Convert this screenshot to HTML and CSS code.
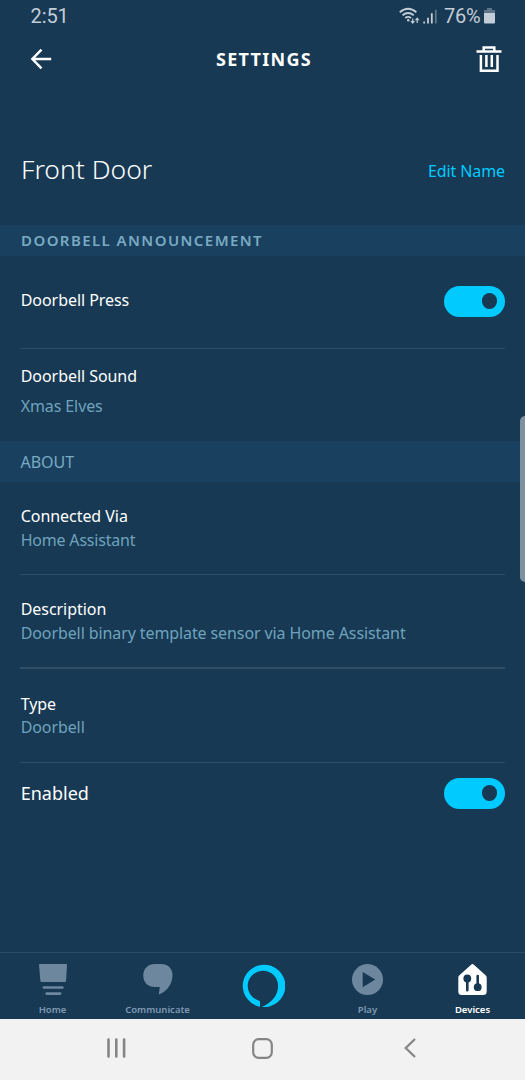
FILE: index.html
```html
<!DOCTYPE html>
<html lang="en">
<head>
<meta charset="utf-8">
<title>Settings</title>
<link rel="stylesheet" href="styles.css">
</head>
<body>
<div class="app">
  <div class="status">
    <span class="clock">2:51</span>
    <svg class="signals" width="40" height="20" viewBox="0 0 40 20" fill="none" stroke="#c3cdd8" stroke-width="1.8">
      <path d="M.8 6.2Q9 -.8 17.4 6.2M3.5 9.2Q9 4.7 14.7 9.2M6.2 12Q9 9.8 12 12"/>
      <circle cx="9.2" cy="14.3" r="1.2" fill="#c3cdd8" stroke="none"/>
      <path d="M13.7 12.5v4M18.2 17v-4" stroke-width="1.2"/>
      <path d="M11.3 15h4.8l-2.4 3zM15.8 14.2h4.8l-2.4-3z" fill="#c3cdd8" stroke="none"/>
      <path d="M25.2 17.5v-2M29 17.5v-5.7M32.8 17.5V7.2"/>
      <path d="M36.8 17.5V3.7" stroke="#5d7489"/>
    </svg>
    <span class="percent">76%</span>
    <svg class="battery" width="11" height="16" viewBox="0 0 11 16">
      <path d="M3 0h5v2h3v4H0V2h3z" fill="#5d7489"/>
      <path d="M0 5h11v9.5a1 1 0 0 1-1 1H1a1 1 0 0 1-1-1z" fill="#c3cdd8"/>
    </svg>
  </div>

  <header class="header">
    <svg width="22" height="22" viewBox="0 0 22 22" fill="none" stroke="#fff" stroke-width="2.5">
      <path d="M21.2 11H2.600M11.500 1.600 2.400 11l9.100 9.400"/>
    </svg>
    <h1 class="heading">SETTINGS</h1>
    <svg width="26" height="27" viewBox="0 0 26 27" fill="none" stroke="#fff" stroke-width="2.5">
      <path d="M.5 5.5h25M7.7 5V1.5h10.6V5M4.9 9v15.700h16.6V9M10.400 9v12M15.800 9v12"/>
    </svg>
  </header>

  <main class="content">
    <div class="device">
      <h2 class="name">Front Door</h2>
      <a class="edit">Edit Name</a>
    </div>

    <h3 class="band announce">DOORBELL ANNOUNCEMENT</h3>
    <section class="row press">
      <span class="label">Doorbell Press</span>
      <span class="toggle"></span>
    </section>
    <section class="row sound">
      <div class="pair">
        <span class="label">Doorbell Sound</span>
        <span class="value">Xmas Elves</span>
      </div>
    </section>

    <h3 class="band about">ABOUT</h3>
    <section class="row via">
      <div class="pair">
        <span class="label">Connected Via</span>
        <span class="value assistant">Home Assistant</span>
      </div>
    </section>
    <section class="row description">
      <div class="pair">
        <span class="label">Description</span>
        <span class="value">Doorbell binary template sensor via Home Assistant</span>
      </div>
    </section>
    <section class="row type">
      <div class="pair">
        <span class="label">Type</span>
        <span class="value">Doorbell</span>
      </div>
    </section>
    <section class="row enabled">
      <span class="label large">Enabled</span>
      <span class="toggle"></span>
    </section>
    <span class="scrollbar"></span>
  </main>

  <nav class="tabs">
    <div class="tab">
      <svg width="28" height="32" viewBox="0 0 28 32" fill="#6d879f">
        <path d="M1 0h26q1 0 1 1l-1 16q-.1 1-1 1H2.500q-1 0-1.100-1L0 1q0-1 1-1z"/>
        <rect x="3.700" y="22.200" width="21" height="2.600" rx="1.300"/>
        <rect x="6.400" y="28.300" width="16" height="2.600" rx="1.300"/>
      </svg>
      <span>Home</span>
    </div>
    <div class="tab">
      <svg width="30" height="32" viewBox="0 0 30 32" fill="#6d879f">
        <path d="M12 0h6c7 0 11.500 4.500 11.500 11 0 9-5.500 16.500-13.700 19.500l1-7.500H12C5 23 .3 18.500.3 11.500S5 0 12 0z"/>
      </svg>
      <span>Communicate</span>
    </div>
    <div class="tab">
      <svg width="44" height="44" viewBox="0 .3 44 44">
        <path fill="#00caff" fill-rule="evenodd" d="M22 1A21.200 21.200 0 0 0 19 43V38.500Q19 37.300 17.800 36.900A15.200 15.200 0 1 1 37.100 22C37.100 32 30 39.500 20.500 43.200A21.200 21.200 0 1 0 22 1z"/>
      </svg>
    </div>
    <div class="tab">
      <svg width="31" height="32" viewBox="0 0 31 32">
        <circle cx="15.500" cy="15.600" r="15.500" fill="#6d879f"/>
        <path d="M10.700 8v15.200l12.600-7.600z" fill="#173953"/>
      </svg>
      <span>Play</span>
    </div>
    <div class="tab active">
      <svg width="29" height="32" viewBox="0 0 29 32">
        <path d="M13.400.5q1.100-1 2.200 0l12 10.700q1.100 1 1.100 2.300V27.500q0 3.500-3.500 3.500H3.800Q.3 31 .3 27.500V13.500q0-1.300 1.100-2.300z" fill="#fff"/>
        <g fill="#173953">
          <circle cx="9.300" cy="14.500" r="3.900"/>
          <circle cx="19.700" cy="23.200" r="3.900"/>
        </g>
        <path d="M9.300 15v11.300M19.700 23V12" fill="none" stroke="#173953" stroke-width="2.600" stroke-linecap="round"/>
      </svg>
      <span>Devices</span>
    </div>
  </nav>

  <div class="system">
    <svg width="19" height="20" viewBox="0 0 19 20" fill="none" stroke="#858585" stroke-width="2.600" stroke-linecap="round">
      <path d="M1.500 1.500v17M9.300 1.500v17M17.100 1.500v17"/>
    </svg>
    <svg width="21" height="21" viewBox="0 0 21 21" fill="none" stroke="#858585" stroke-width="2.200">
      <rect x="1.200" y="1.200" width="18.600" height="18.600" rx="5.500"/>
    </svg>
    <svg width="20" height="20" viewBox="-5 0 20 20" fill="none" stroke="#858585" stroke-width="2.200">
      <path d="M11 1 1.700 10l9.300 9"/>
    </svg>
  </div>
</div>
</body>
</html>
```
FILE: styles.css
```css
* { box-sizing: border-box; }

body {
  margin: 0;
  background: #173953;
  font-family: "Noto Sans", "Open Sans", sans-serif;
  color: #fff;
}

h1, h2, h3 { margin: 0; }

.app {
  display: flex;
  flex-direction: column;
  width: 525px;
  height: 1080px;
  overflow: hidden;
}

.status {
  display: flex;
  align-items: center;
  height: 32px;
  padding: 0 30px;
  font-family: Roboto, sans-serif;
  font-size: 20px;
  letter-spacing: -.2px;
  color: #c3cdd8;
}

.clock { padding-left: .6px; letter-spacing: -.1px; }
.signals { margin-left: auto; }
.percent { margin-left: 4.500px; }
.battery { margin-left: 3.500px; }

.header {
  display: flex;
  align-items: center;
  justify-content: space-between;
  height: 54px;
  padding: 0 23px 0 30px;
}

.heading {
  font-size: 18px;
  letter-spacing: 1.300px;
}

.content {
  position: relative;
  flex: 1;
}

.device {
  display: flex;
  align-items: center;
  justify-content: space-between;
  height: 139px;
  padding: 30px 20px 0 21px;
}

.name {
  padding-bottom: 4px;
  font-size: 26.500px;
  font-weight: 300;
}

.edit {
  font-size: 16px;
  letter-spacing: -.1px;
  color: #00caff;
}

.band {
  display: flex;
  align-items: center;
  padding: 0 21px;
  background: #1a4060;
  color: #79aac2;
}

.announce {
  height: 31px;
  padding-bottom: 1px;
  font-size: 15px;
  font-weight: 600;
  letter-spacing: 1.420px;
}

.about {
  height: 41px;
  padding-left: 20.500px;
  font-size: 16px;
  font-weight: 400;
}

.row {
  display: flex;
  justify-content: space-between;
  align-items: center;
  margin: 0 20px;
  border-bottom: 1px solid #2e4e68;
}

.press { height: 93px; padding-bottom: 2px; }
.press .label { padding-bottom: 2px; }
.sound { height: 92px; padding-bottom: 8px; border-bottom: 0; }
.via { height: 93px; }
.description { height: 94px; border-bottom-width: 2px; }
.type { height: 94px; }
.enabled { height: 62px; padding-bottom: 2px; border-bottom: 0; }

.pair {
  display: flex;
  flex-direction: column;
}

.label, .value {
  padding-left: .7px;
  font-size: 16px;
  line-height: 24px;
}

.label { letter-spacing: -.05px; }

.value {
  letter-spacing: -.100px;
  color: #6fa3bd;
}

.assistant { letter-spacing: -.200px; }
.sound .pair { gap: 6px; }
.type .pair { gap: 0; }
.type .value { line-height: 23px; }
.label.large { font-size: 18px; letter-spacing: 0; }

.toggle {
  display: flex;
  align-items: center;
  justify-content: flex-end;
  width: 61.500px;
  height: 31px;
  padding-right: 8px;
  border-radius: 16px;
  background: #00caff;
}

.toggle::after {
  content: "";
  width: 15.500px;
  height: 15.500px;
  border-radius: 50%;
  background: #173953;
}

.scrollbar {
  position: absolute;
  top: 330px;
  right: 0;
  width: 5px;
  height: 166px;
  border-radius: 5px 0 0 5px;
  background: #7e919f;
}

.tabs {
  display: grid;
  grid-template-columns: repeat(5, minmax(0, 1fr));
  height: 67px;
  border-top: 1px solid #2a4d67;
}

.tab {
  display: flex;
  flex-direction: column;
  align-items: center;
  padding-top: 11px;
  font-size: 9.500px;
  font-weight: 600;
  line-height: 13px;
  color: #7f9ab4;
}

.tab span { margin-top: 7px; }
.active { color: #fff; }

.system {
  display: flex;
  align-items: center;
  justify-content: space-between;
  height: 61px;
  padding: 0 106px 3px 107px;
  background: #f2f2f2;
}
```
